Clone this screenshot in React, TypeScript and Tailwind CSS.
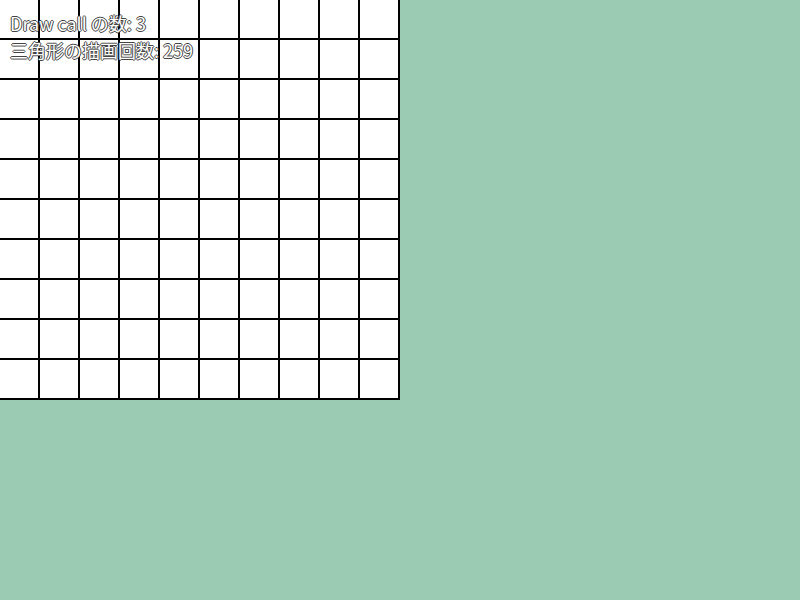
import React from "react";

export default function App() {
  return (
    <div className="relative w-[800px] h-[600px] bg-[#9bcbb3] overflow-hidden">
      <div className="grid grid-cols-10 w-[400px] h-[400px]">
        {Array(100)
          .fill(null)
          .map((_, i) => (
            <div
              key={i}
              className="w-10 h-10 bg-white border-r-2 border-b-2 border-black"
            ></div>
          ))}
      </div>
      <div
        className="absolute left-[10px] top-[10px] text-[18px] leading-[27px] text-white [text-shadow:1px_0_0_#444,-1px_0_0_#444,0_1px_0_#444,0_-1px_0_#444]"
        style={{ fontFamily: '"Noto Sans CJK JP", "Noto Sans", sans-serif' }}
      >
        <div>Draw call の数: 3</div>
        <div>三角形の描画回数: 259</div>
      </div>
    </div>
  );
}
